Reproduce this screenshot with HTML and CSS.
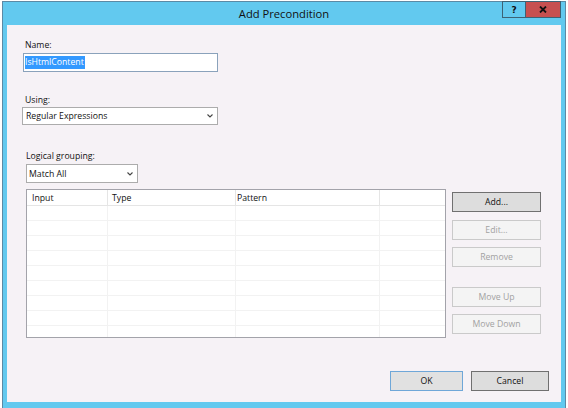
FILE: index.html
```html
<!DOCTYPE html>
<html>
<head>
<meta charset="utf-8">
<title>Add Precondition</title>
<link rel="stylesheet" href="styles.css">
</head>
<body>
<div class="window">
  <div class="titlebar">
    <div class="tb-spacer"></div>
    <div class="title">Add Precondition</div>
    <div class="caption-btns">
      <div class="cbtn help">?</div>
      <div class="cbtn close">
        <svg width="8" height="7" viewBox="0 0 8 7"><path d="M1 0.5 L7 6.5 M7 0.5 L1 6.5" stroke="#111" stroke-width="1.8" fill="none"/></svg>
      </div>
    </div>
  </div>
  <div class="client">
    <div class="lbl lbl-name">Name:</div>
    <div class="textbox"><span class="sel">IsHtmlContent</span></div>
    <div class="lbl lbl-using">Using:</div>
    <div class="combo combo-using">
      <span class="combo-text">Regular Expressions</span>
      <svg class="chev" width="6" height="4" viewBox="0 0 6 4"><path d="M0.5 0.5 L3 3 L5.5 0.5" stroke="#444" stroke-width="1.1" fill="none"/></svg>
    </div>
    <div class="lbl lbl-group">Logical grouping:</div>
    <div class="combo combo-group">
      <span class="combo-text">Match All</span>
      <svg class="chev" width="6" height="4" viewBox="0 0 6 4"><path d="M0.5 0.5 L3 3 L5.5 0.5" stroke="#444" stroke-width="1.1" fill="none"/></svg>
    </div>
    <div class="main-row">
      <div class="listview">
        <div class="lv-row lv-header">
          <div class="c c1">Input</div>
          <div class="c c2">Type</div>
          <div class="c c3">Pattern</div>
          <div class="c c4"></div>
        </div>
        <div class="lv-row"><div class="c c1"></div><div class="c c2"></div><div class="c c3"></div><div class="c c4"></div></div>
        <div class="lv-row"><div class="c c1"></div><div class="c c2"></div><div class="c c3"></div><div class="c c4"></div></div>
        <div class="lv-row"><div class="c c1"></div><div class="c c2"></div><div class="c c3"></div><div class="c c4"></div></div>
        <div class="lv-row"><div class="c c1"></div><div class="c c2"></div><div class="c c3"></div><div class="c c4"></div></div>
        <div class="lv-row"><div class="c c1"></div><div class="c c2"></div><div class="c c3"></div><div class="c c4"></div></div>
        <div class="lv-row"><div class="c c1"></div><div class="c c2"></div><div class="c c3"></div><div class="c c4"></div></div>
        <div class="lv-row"><div class="c c1"></div><div class="c c2"></div><div class="c c3"></div><div class="c c4"></div></div>
        <div class="lv-row"><div class="c c1"></div><div class="c c2"></div><div class="c c3"></div><div class="c c4"></div></div>
        <div class="lv-row"><div class="c c1"></div><div class="c c2"></div><div class="c c3"></div><div class="c c4"></div></div>
      </div>
      <div class="side-btns">
        <div class="btn btn-add">Add...</div>
        <div class="btn btn-disabled btn-edit">Edit...</div>
        <div class="btn btn-disabled btn-remove">Remove</div>
        <div class="btn btn-disabled btn-up">Move Up</div>
        <div class="btn btn-disabled btn-down">Move Down</div>
      </div>
    </div>
    <div class="footer">
      <div class="btn btn-ok">OK</div>
      <div class="btn btn-cancel">Cancel</div>
    </div>
  </div>
</div>
</body>
</html>
```

FILE: styles.css
```css
html, body {
  margin: 0;
  padding: 0;
  background: #ffffff;
  overflow: hidden;
}

body {
  font-family: "Open Sans", "Noto Sans", sans-serif;
  color: #000;
}

.window {
  margin-left: 2px;
  margin-top: 1px;
  width: 564px;
  height: 420px;
  box-sizing: border-box;
  background: #62c9ef;
  border: 1px solid #5b8aa5;
  border-bottom: none;
  padding: 0 4px;
}

.titlebar {
  height: 23px;
  display: grid;
  grid-template-columns: 1fr auto 1fr;
  align-items: center;
}

.title {
  font-size: 11.2px;
  line-height: 22px;
  color: #111;
  white-space: nowrap;
}

.caption-btns {
  justify-self: end;
  align-self: start;
  display: flex;
  margin-top: -1px;
}

.cbtn {
  height: 17px;
  box-sizing: border-box;
  border: 1px solid #3d6275;
  display: flex;
  align-items: center;
  justify-content: center;
}

.help {
  width: 23px;
  background: #62c9ef;
  font-family: "DejaVu Sans", sans-serif;
  font-weight: bold;
  font-size: 9px;
  color: #111;
  border-right: none;
}

.close {
  width: 36px;
  background: #c75050;
}

.client {
  background: #f6f2f6;
  height: 377px;
  box-sizing: border-box;
  padding-left: 15px;
  display: flex;
  flex-direction: column;
  align-items: flex-start;
  font-size: 8.7px;
}

.lbl {
  line-height: 12px;
  color: #111;
  white-space: nowrap;
}

.lbl-name {
  margin-top: 14px;
  margin-left: 3px;
}

.textbox {
  margin-top: 2px;
  margin-left: 1px;
  width: 195px;
  height: 19px;
  box-sizing: border-box;
  border: 1px solid #8aa2bb;
  background: #fff;
  display: flex;
  align-items: center;
  padding-left: 1px;
}

.sel {
  background: #3399ff;
  color: #fff;
  line-height: 13px;
  padding-right: 1px;
}

.lbl-using {
  margin-top: 22px;
  margin-left: 3px;
}

.combo {
  box-sizing: border-box;
  border: 1px solid #acacac;
  background: #fff;
  display: flex;
  align-items: center;
  justify-content: space-between;
}

.combo-using {
  margin-top: 1px;
  width: 196px;
  height: 18px;
  padding: 0 4px 0 3px;
}

.lbl-group {
  margin-top: 25px;
  margin-left: 4px;
}

.combo-group {
  margin-top: 2px;
  margin-left: 4px;
  width: 112px;
  height: 19px;
  padding: 0 4px 0 2px;
}

.combo-text {
  color: #111;
  white-space: nowrap;
}

.main-row {
  margin-top: 6px;
  margin-left: 4px;
  display: flex;
  align-items: flex-start;
}

.listview {
  width: 420px;
  height: 149px;
  box-sizing: border-box;
  border: 1px solid #a3a3aa;
  background: #fff;
  overflow: hidden;
}

.lv-row {
  display: flex;
  height: 15px;
  box-sizing: border-box;
  border-bottom: 1px solid #f2f2f2;
}

.lv-header {
  height: 16px;
  border-bottom: 1px solid #e5e5e5;
}

.c {
  box-sizing: border-box;
  border-right: 1px solid #f2f2f2;
  line-height: 15px;
  white-space: nowrap;
  color: #111;
}

.lv-header .c {
  border-right-color: #e5e5e5;
  padding-top: 1px;
}

.c1 { width: 81px; padding-left: 5px; }
.c2 { width: 128px; padding-left: 4px; }
.c3 { width: 144px; padding-left: 1px; }
.c4 { flex: 1; border-right: none; }

.side-btns {
  margin-left: 6px;
  padding-top: 3px;
  display: flex;
  flex-direction: column;
}

.btn {
  box-sizing: border-box;
  height: 20px;
  display: flex;
  align-items: center;
  justify-content: center;
  background: #dddddd;
  border: 1px solid #707070;
  color: #111;
  white-space: nowrap;
}

.side-btns .btn {
  width: 89px;
}

.btn-disabled {
  background: #f4f4f4;
  border-color: #cacaca;
  color: #a2a2a2;
}

.btn-edit { margin-top: 8px; }
.btn-remove { margin-top: 7px; }
.btn-up { margin-top: 20px; }
.btn-down { margin-top: 7px; }

.footer {
  align-self: stretch;
  margin-top: 33px;
  padding-right: 12px;
  display: flex;
  justify-content: flex-end;
  gap: 8px;
}

.btn-ok {
  width: 73px;
  border-color: #6fa7d8;
  background: #e1e1e1;
}

.btn-cancel {
  width: 78px;
}
```
